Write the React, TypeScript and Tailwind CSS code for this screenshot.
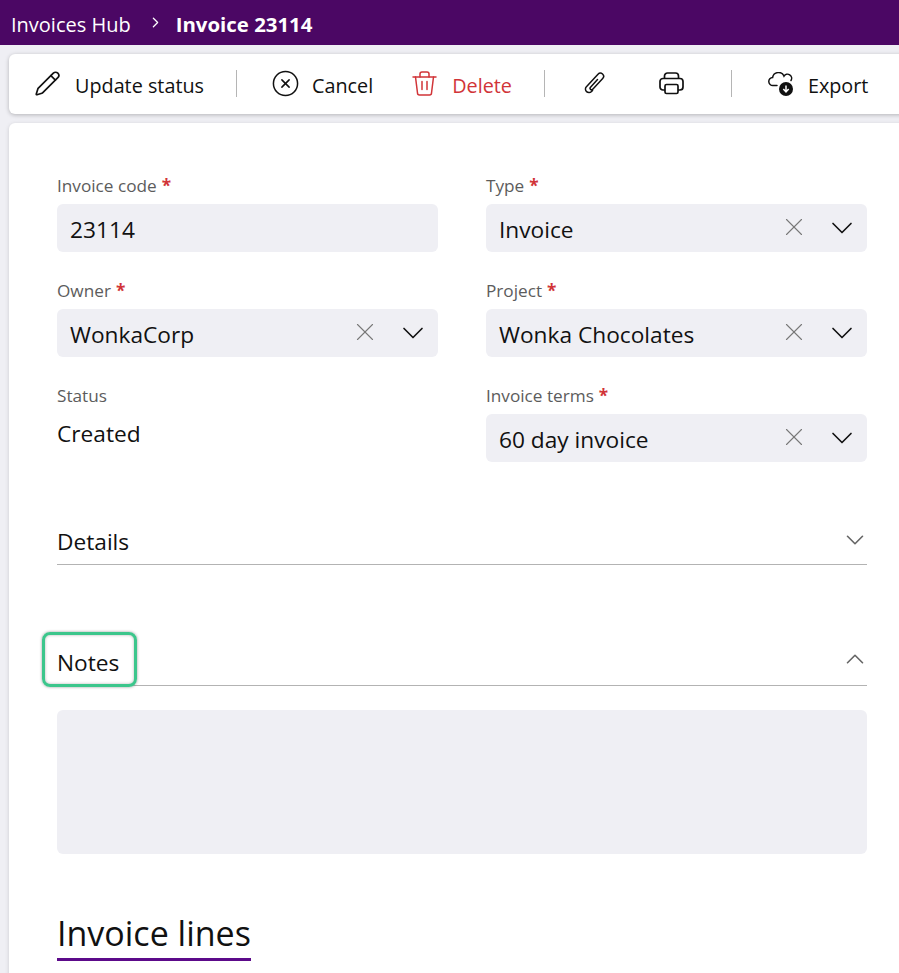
import { ChevronDown, ChevronRight, ChevronUp, CircleX, Pencil, X } from 'lucide-react';

const font = "font-['Open_Sans','Noto_Sans',sans-serif]";

function Label({ text, required }: { text: string; required?: boolean }) {
  return (
    <div className="h-[19px] text-[17.2px] leading-[19px] text-[#5c5c5c] whitespace-nowrap">
      {text}
      {required && <span className="ml-[5px] font-bold text-[#d13438]">*</span>}
    </div>
  );
}

function SelectField({ label, value }: { label: string; value: string }) {
  return (
    <div>
      <Label text={label} required />
      <div className="mt-[9px] flex h-12 items-center justify-between rounded-md bg-[#efeff4] pl-[13px] pr-[7px]">
        <span className="pt-[4px] text-[22.7px] leading-none text-[#111]">{value}</span>
        <div className="flex items-center gap-[15px]">
          <X className="mb-[2px] h-[30px] w-[30px] text-[#777]" strokeWidth={0.9} />
          <ChevronDown className="h-9 w-9 text-[#111]" strokeWidth={1.1} />
        </div>
      </div>
    </div>
  );
}

function TrashIcon() {
  return (
    <svg width="25" height="25" viewBox="0 0 25 25" fill="none" stroke="#d13438" strokeWidth="1.5" strokeLinecap="round" strokeLinejoin="round">
      <path d="M1 6h23" />
      <path d="M8 6V3a2 2 0 0 1 2-2h5a2 2 0 0 1 2 2v3" />
      <path d="M3.5 6l2 16a2 2 0 0 0 2 2h10a2 2 0 0 0 2-2l2-16" />
      <path d="M10 10.5v8M15 10.5v8" />
    </svg>
  );
}

function ClipIcon() {
  return (
    <svg width="21" height="23" viewBox="0 0 21 23" fill="none" stroke="#111" strokeWidth="1.5" strokeLinecap="round" strokeLinejoin="round">
      <path d="M13.5 7.5 6.3 15.4a1.5 1.5 0 0 0 2.2 2L18.7 6.6a3.2 3.2 0 0 0-4.7-4.4L2.4 14.7a3.5 3.5 0 0 0 5.1 4.8l1-1.1" />
    </svg>
  );
}

function PrintIcon() {
  return (
    <svg width="25" height="23" viewBox="0 0 25 23" fill="none" stroke="#111" strokeWidth="1.7" strokeLinejoin="round">
      <path d="M5.5 6.5V4a3 3 0 0 1 3-3h8a3 3 0 0 1 3 3v2.5" />
      <rect x="1" y="6.5" width="23" height="11.5" rx="3" />
      <rect x="6" y="12.5" width="13" height="9" rx="1.5" fill="#fff" />
    </svg>
  );
}

function ExportIcon() {
  return (
    <svg width="25" height="24" viewBox="0 0 25 24" fill="none" stroke="#111" strokeWidth="1.5">
      <path d="M9 13.5H5a4 4 0 0 1-.4-8 6 6 0 0 1 11.4-1.4 4 4 0 0 1 7 4.4" strokeLinecap="round" />
      <circle cx="18" cy="17" r="7" fill="#111" stroke="none" />
      <path d="M18 13.5v6M15.3 17l2.7 2.8 2.7-2.8" stroke="#fff" strokeWidth="1.5" />
    </svg>
  );
}

export default function App() {
  return (
    <div className={`h-[973px] overflow-hidden bg-[#efeff4] ${font}`}>
      <header className="flex h-[45px] items-center bg-[#4b0764] pl-[11px] text-white">
        <span className="pt-[4px] text-[20px]">Invoices Hub</span>
        <ChevronRight className="ml-[16px] h-[17px] w-[17px]" strokeWidth={1.8} />
        <span className="ml-[12px] pt-[3px] text-[20.4px] font-bold">Invoice 23114</span>
      </header>

      <div className="ml-[9px] mt-[9px] flex h-[60px] w-[950px] items-center rounded-l-md bg-white pb-px pl-[25px] text-[19.8px] text-[#111] shadow-[0_1px_4px_rgba(0,0,0,0.25)]">
        <Pencil className="h-[27px] w-[27px]" strokeWidth={1.5} />
        <span className="ml-[14px] pt-1">Update status</span>
        <div className="ml-[32px] h-[27px] w-px bg-[#b5b5b5]" />
        <CircleX className="ml-[34px] h-[29px] w-[29px]" strokeWidth={1.25} />
        <span className="ml-[12px] pt-1">Cancel</span>
        <div className="ml-[39px]"><TrashIcon /></div>
        <span className="ml-[15px] pt-1 text-[#d13438]">Delete</span>
        <div className="ml-[32px] h-[27px] w-px bg-[#b5b5b5]" />
        <div className="ml-[39px]"><ClipIcon /></div>
        <div className="ml-[54px]"><PrintIcon /></div>
        <div className="ml-[47px] h-[27px] w-px bg-[#b5b5b5]" />
        <div className="ml-[36px]"><ExportIcon /></div>
        <span className="ml-[15px] pt-1">Export</span>
      </div>

      <main className="ml-[9px] mt-[9px] h-[900px] w-[950px] rounded-l-md bg-white pl-[48px] pt-[53px] shadow-[0_1px_4px_rgba(0,0,0,0.15)]">
        <div className="w-[810px]">
          <div className="grid grid-cols-2 gap-x-[48px] gap-y-[29px]">
            <div>
              <Label text="Invoice code" required />
              <div className="mt-[9px] flex h-12 items-center rounded-md bg-[#efeff4] pl-[13px] pt-[4px] text-[22.7px] leading-none text-[#111]">23114</div>
            </div>
            <SelectField label="Type" value="Invoice" />
            <SelectField label="Owner" value="WonkaCorp" />
            <SelectField label="Project" value="Wonka Chocolates" />
            <div>
              <Label text="Status" />
              <div className="mt-[14px] text-[22.7px] leading-[30px] text-[#111]">Created</div>
            </div>
            <SelectField label="Invoice terms" value="60 day invoice" />
          </div>

          <div className="mt-[57px] flex h-[46px] items-center justify-between border-b border-[#b3b3b3] pb-[4px]">
            <span className="pt-[6px] text-[22.7px] text-[#111]">Details</span>
            <ChevronDown className="mr-[-3px] h-[30px] w-[30px] text-[#666]" strokeWidth={1.3} />
          </div>

          <div className="relative mt-[75px] flex h-[46px] items-center justify-between border-b border-[#b3b3b3] pb-[4px]">
            <span className="pt-[6px] text-[22.7px] text-[#111]">Notes</span>
            <ChevronUp className="mb-[4px] mr-[-3px] h-[30px] w-[30px] text-[#666]" strokeWidth={1.3} />
            <div className="absolute left-[-15px] top-[-8px] h-[55px] w-[95px] rounded-lg border-[3px] border-[#3cc68c] shadow-[0_0_3px_rgba(0,0,0,0.4),inset_0_0_3px_rgba(0,0,0,0.3)]" />
          </div>

          <div className="mt-[24px] h-[144px] rounded-md bg-[#efeff4]" />

          <div className="mt-[57px] inline-block border-b-[3px] border-[#5c0a8a] pb-[2px] text-[34px] leading-[45px] text-[#111]">Invoice lines</div>
        </div>
      </main>
    </div>
  );
}
